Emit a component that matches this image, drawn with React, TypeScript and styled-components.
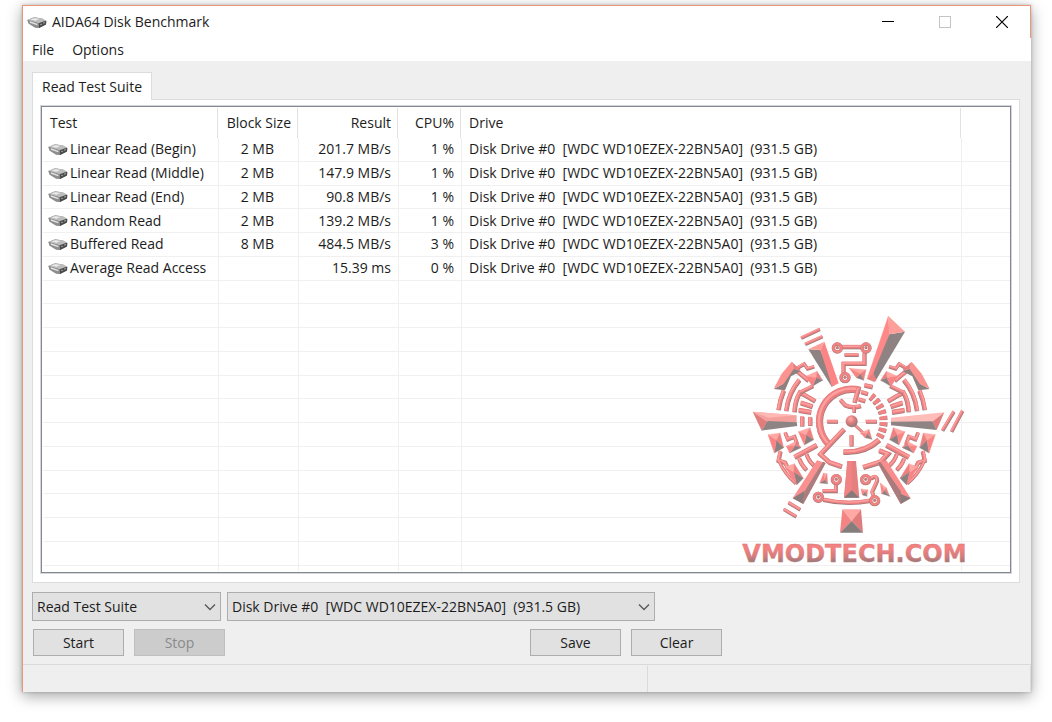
import React from "react";
import styled, { createGlobalStyle, css } from "styled-components";

const GlobalStyle = createGlobalStyle`
  *, *::before, *::after { box-sizing: border-box; }
  body {
    margin: 0;
    background: #fff;
    color: #1c1c1c;
    font: 14px/20px "Open Sans", "Noto Sans", sans-serif;
  }
  button, select { font: inherit; color: inherit; margin: 0; }
`;

const Desktop = styled.div`
  display: flex;
  min-height: 100vh;
  padding: 5px 21px 30px 22px;
`;

const Window = styled.main`
  position: relative;
  flex: 1;
  display: flex;
  flex-direction: column;
  min-width: 0;
  background: #efefef;
  border-top: 1px solid #e9967a;
  border-left: 1px solid #e9967a;
  box-shadow: 0 4px 14px rgba(0, 0, 0, 0.36), 0 0 3px rgba(0, 0, 0, 0.2);
`;

const TitleBar = styled.header`
  display: flex;
  align-items: center;
  height: 32px;
  padding-left: 4px;
  background: #fff;
  border-right: 1px solid #e9967a;
`;

const Title = styled.h1`
  flex: 1;
  margin: 0 0 0 5px;
  font-size: 14px;
  font-weight: 400;
`;

const CaptionButton = styled.button`
  display: grid;
  place-items: center;
  width: 57px;
  height: 30px;
  padding: 0;
  border: 0;
  background: none;
`;

const MenuBar = styled.nav`
  display: flex;
  gap: 18px;
  height: 23px;
  padding-left: 9px;
  background: #fff;
`;

const MenuItem = styled.button`
  padding: 0;
  border: 0;
  background: none;
  line-height: 24px;
`;

const Content = styled.div`
  flex: 1;
  display: flex;
  flex-direction: column;
  padding: 11px 11px 8px 9px;
`;

const Tab = styled.button`
  align-self: flex-start;
  z-index: 1;
  height: 28px;
  margin-bottom: -1px;
  padding: 0 9px;
  line-height: 26px;
  background: #fff;
  border: 1px solid #dcdcdc;
  border-bottom: 0;
`;

const TabPanel = styled.section`
  flex: 1;
  display: grid;
  padding: 6px 8px 9px;
  background: #fff;
  border: 1px solid #dcdcdc;
`;

const ListView = styled.div`
  position: relative;
  display: grid;
  border: 1px solid #828790;
  box-shadow: 0 0 0 1px #d4d6d9;
  padding: 1px 0 1px 1px;
`;

const Table = styled.table`
  width: 100%;
  height: 100%;
  table-layout: fixed;
  border-collapse: separate;
  border-spacing: 0;
`;

type Align = "left" | "right";

const HeadCell = styled.th<{ $align?: Align }>`
  height: 30px;
  padding: 0 1px 0 0;
  font-weight: 400;
  text-align: ${(p) => p.$align ?? "left"};
`;

const HeadLabel = styled.span<{ $last?: boolean }>`
  display: block;
  padding: 0 6px 0 7px;
  line-height: 30px;
  white-space: nowrap;
  ${(p) => !p.$last && css`border-right: 1px solid #e2e2e2;`}
`;

const Cell = styled.td<{ $align?: Align; $end?: number }>`
  height: 23px;
  padding: 0 ${(p) => p.$end ?? 7}px 0 7px;
  line-height: 22px;
  white-space: pre;
  text-align: ${(p) => p.$align ?? "left"};
  border-right: 1px solid #f0f0f0;
  border-bottom: 1px solid #f0f0f0;
  &:last-child { border-right: 0; }
`;

const TailCell = styled(Cell)`
  height: 5px;
  border-bottom: 0;
`;

const TestName = styled.span`
  display: flex;
  align-items: center;
  gap: 2px;
  margin-left: -2px;
`;

const Watermark = styled.svg`
  position: absolute;
  right: 35px;
  bottom: -8px;
  width: 240px;
  height: 275px;
  pointer-events: none;
`;

const Controls = styled.div`
  display: flex;
  flex-direction: column;
  gap: 8px;
  padding-top: 9px;
`;

const ControlRow = styled.div<{ $inset?: boolean }>`
  display: flex;
  gap: ${(p) => (p.$inset ? 10 : 6)}px;
  padding-left: ${(p) => (p.$inset ? 1 : 0)}px;
`;

const SelectBox = styled.label<{ $width: number }>`
  display: grid;
  align-items: center;
  width: ${(p) => p.$width}px;
  > * { grid-area: 1 / 1; }
  > svg { justify-self: end; margin-right: 5px; pointer-events: none; }
`;

const Select = styled.select`
  appearance: none;
  width: 100%;
  height: 29px;
  padding: 0 20px 0 4px;
  border: 1px solid #adadad;
  border-radius: 0;
  background: #e1e1e1;
`;

const Button = styled.button<{ $pushed?: boolean }>`
  width: 91px;
  height: 27px;
  padding: 0;
  border: 1px solid #adadad;
  background: #e1e1e1;
  ${(p) => p.$pushed && css`margin-left: 295px;`}
  &:disabled {
    color: #8a8a8a;
    background: #cccccc;
    border-color: #bfbfbf;
  }
`;

const StatusBar = styled.footer`
  display: grid;
  grid-template-columns: 625px 1fr;
  height: 28px;
  padding-top: 1px;
  border-top: 1px solid #dadada;
`;

const StatusPane = styled.div`
  border-right: 1px solid #dadada;
`;

const DriveIcon = () => (
  <svg width="20" height="13" viewBox="0 0 20 13" aria-hidden="true">
    <path d="M0.4 4 L7 1.2 L15 2.4 L19.4 5 L19 8.6 L12 12 L8 11.6 L1.6 7.6 Z" fill="#8a8a8a" />
    <path d="M0.4 4 L7 1.2 L15 2.4 L18.6 4.6 L11.8 7.2 Z" fill="#bdbdbd" />
    <path d="M3.6 3.6 L7.6 2.2 L12 3 L8.4 4.8 Z" fill="#ececec" />
    <path d="M0.4 4 L11.8 7.2 L11.6 12 L8 11.6 L1.6 7.6 Z" fill="#8e8e8e" />
    <path d="M3 6 L10.4 8.6" stroke="#e2e2e2" strokeWidth="1.4" />
    <path d="M11.8 7.2 L19.2 4.8 L19 8.6 L12 12 Z" fill="#4a4a4a" />
    <path d="M13.2 8.8 L15 8 M16.2 7.2 L17.8 6.4" stroke="#a0a0a0" strokeWidth="1.2" />
  </svg>
);

const Chevron = () => (
  <svg width="12" height="8" viewBox="0 0 12 8" aria-hidden="true">
    <path d="M1 1.5 L6 6.5 L11 1.5" fill="none" stroke="#5a5a5a" strokeWidth="1.4" />
  </svg>
);

const Rod = ({ d, w = 9 }: { d: string; w?: number }) => (
  <g fill="none">
    <path d={d} stroke="#a07878" strokeWidth={w} transform="translate(1 2)" />
    <path d={d} stroke="#ec8080" strokeWidth={w - 1} />
    <path d={d} stroke="#ffa0a0" strokeWidth={w / 3} transform="translate(-1 -1)" />
  </g>
);

const Gem = ({ pts, cx, cy }: { pts: [number, number][]; cx: number; cy: number }) => {
  const fills = ["#ffa8a4", "#ee8080", "#8c8080", "#fa8484"];
  return (
    <g>
      {pts.map((p, i) => {
        const q = pts[(i + 1) % pts.length];
        return (
          <polygon
            key={i}
            points={`${p[0]},${p[1]} ${q[0]},${q[1]} ${cx},${cy}`}
            fill={fills[i % fills.length]}
            stroke={fills[i % fills.length]}
          />
        );
      })}
    </g>
  );
};

const Node = ({ x, y }: { x: number; y: number }) => (
  <g fill="none">
    <circle cx={x} cy={y + 1} r="12" stroke="#a87878" strokeWidth="10" />
    <circle cx={x} cy={y} r="12" stroke="#f08282" strokeWidth="8" />
    <circle cx={x} cy={y} r="5" fill="#c87a7a" />
  </g>
);

const GearSide = () => (
  <g>
    <Rod d="M130 314 Q134 284 146 256" w={13} />
    <Rod d="M153 317 Q160 262 193 224" w={13} />
    <Rod d="M178 320 Q180 284 194 262 L214 272 L240 288" w={13} />
    <Rod d="M194 262 L234 242" w={11} />
    <Rod d="M180 192 L207 176 L217 190 L237 184" w={10} />
    <Rod d="M182 194 L220 226" w={13} />
    <polygon points="172,190 197,199 168,214 150,256 116,252 142,238" fill="#8f8080" />
    <polygon points="116,251 140,206 170,170 176,192 146,236" fill="#fb9491" />
    <polygon points="170,170 198,196 176,192" fill="#e88080" />
    <Gem pts={[[212, 214], [246, 199], [263, 226], [232, 244]]} cx={244} cy={218} />
    <Rod d="M197 293 L232 304" w={14} />
    <Rod d="M191 315 L228 321" w={14} />

    <Rod d="M136 438 L130 466 L150 472 L160 492" w={12} />
    <Rod d="M132 468 Q150 508 182 534" w={10} />
    <Gem pts={[[99, 389], [135, 384], [146, 428], [118, 444]]} cx={124} cy={406} />
    <Gem pts={[[150, 486], [178, 476], [205, 520], [185, 540]]} cx={176} cy={502} />
    <Rod d="M150 382 L158 402 L178 394 L186 416" w={11} />
    <Gem pts={[[154, 424], [184, 408], [198, 428], [164, 444]]} cx={180} cy={422} />
    <Gem pts={[[190, 380], [225, 368], [236, 404], [208, 420]]} cx={213} cy={390} />
    <Rod d="M178 456 L245 420" w={14} />
    <Rod d="M192 460 Q198 478 214 494" w={12} />
    <Rod d="M214 446 Q220 466 236 480" w={12} />
  </g>
);

const VmodtechLogo = () => (
  <Watermark viewBox="0 0 720 825" role="img" aria-label="VMODTECH.COM">
    <defs>
      <linearGradient id="letters" x1="0" y1="0" x2="0" y2="1">
        <stop offset="0.3" stopColor="#f58080" />
        <stop offset="0.6" stopColor="#d07c7c" />
        <stop offset="0.8" stopColor="#8c7c7c" />
      </linearGradient>
      <radialGradient id="hub" cx="0.4" cy="0.3" r="0.7">
        <stop offset="0" stopColor="#ffb0b0" />
        <stop offset="0.5" stopColor="#e07c7c" />
        <stop offset="1" stopColor="#8f7a7a" />
      </radialGradient>
    </defs>

    <polygon points="460,33 463,88 422,204 396,222" fill="#ff8888" stroke="#ff8888" />
    <polygon points="463,88 510,80 420,230 414,208" fill="#8f8282" />
    <polygon points="460,33 510,80 463,88" fill="#ff9f9a" />
    <polygon points="396,222 416,204 424,226 418,231" fill="#e88080" />

    <polygon points="220,133 256,135 300,240 290,245" fill="#8f8282" />
    <polygon points="268,110 311,235 290,245 286,228 256,135" fill="#fb8484" />
    <polygon points="220,133 268,110 256,135" fill="#ff9d9a" />
    <Rod d="M198 98 L254 72" />
    <Rod d="M210 117 L262 94" />

    <Rod d="M320 125 H380" w={12} />
    <Rod d="M328 149 H370" w={10} />
    <Rod d="M388 142 V175 H325 V206" w={12} />
    <Node x={307} y={128} />
    <Node x={393} y={128} />
    <Node x={330} y={217} />
    <Gem pts={[[343, 190], [393, 194], [386, 226], [364, 218]]} cx={376} cy={206} />

    <GearSide />
    <g transform="translate(700 0) scale(-1 1)">
      <GearSide />
    </g>

    <polygon points="53,320 185,331 185,355 98,350" fill="#f6a09d" />
    <polygon points="53,320 185,331 100,338" fill="#ffb9b5" />
    <polygon points="53,320 98,350 80,377" fill="#e07e7e" />
    <polygon points="98,348 185,352 187,363 80,377" fill="#8f8484" />
    <polygon points="468,338 628,322 592,350 468,352" fill="#ffbdb9" />
    <polygon points="628,322 605,375 592,350" fill="#e07e7e" />
    <polygon points="468,350 592,349 605,375 468,361" fill="#8f8484" />
    <Rod d="M656 319 L622 376" w={10} />
    <Rod d="M682 317 L649 379" w={10} />
    <Rod d="M201 334 V363" w={13} />
    <Rod d="M225 336 V361" w={13} />

    <Rod d="M375 255 A97 97 0 0 0 282 418" w={21} />
    <Rod d="M370 250 L358 292" w={13} />
    <Rod d="M327 372 L256 447 L284 472 L320 484" w={14} />
    <Rod d="M316 284 L330 300 Q352 310 377 302" w={12} />
    <Rod d="M357 304 V322" w={10} />
    <Rod d="M388 240 L412 245" w={13} />
    <Rod d="M378 260 L398 266" w={12} />
    <Rod d="M370 282 L390 288" w={12} />
    <g fill="none" strokeDasharray="11 7">
      <path d="M408 274 A96 96 0 0 1 432 400" stroke="#a07878" strokeWidth="24" />
      <path d="M408 273 A96 96 0 0 1 432 399" stroke="#f38484" strokeWidth="21" />
    </g>
    <Rod d="M325 440 Q388 444 432 404" w={16} />
    <Rod d="M432 436 L458 446 L436 470 L384 486" w={14} />

    <Rod d="M276 349 H308" w={11} />
    <Rod d="M392 349 H425" w={11} />
    <Rod d="M349 390 V423" w={12} />
    <Rod d="M358 358 L388 386" w={8} />
    <Gem pts={[[376, 384], [402, 373], [411, 403], [390, 398]]} cx={396} cy={386} />
    <circle cx="350" cy="349" r="18" fill="url(#hub)" />

    <polygon points="246,466 272,474 205,597 173,580" fill="#fb9090" />
    <polygon points="272,474 205,597 208,560 264,470" fill="#a87e7e" />
    <polygon points="173,580 208,558 205,597" fill="#8a7c7c" />
    <polygon points="454,466 428,474 497,597 527,580" fill="#fb8c8c" />
    <polygon points="428,474 497,597 498,560 436,470" fill="#a87c7c" />
    <polygon points="497,597 496,566 527,580" fill="#8a7c7c" />
    <Rod d="M160 592 L195 613" w={10} />
    <Rod d="M146 612 L183 634" w={10} />

    <polygon points="337,468 363,468 373,578 327,578" fill="#e57e7e" />
    <polygon points="337,468 350,468 350,556 327,578" fill="#f08484" />
    <polygon points="327,578 350,556 373,578" fill="#857a7a" />

    <polygon points="322,613 378,613 350,648" fill="#ffa8a4" />
    <polygon points="322,613 350,648 315,683" fill="#f48484" />
    <polygon points="378,613 384,683 350,648" fill="#e07c7c" />
    <polygon points="315,683 350,648 384,683" fill="#857c7c" />

    <Rod d="M302 538 V557 H262" w={11} />
    <Rod d="M264 583 Q335 600 406 586" w={12} />
    <Rod d="M406 520 Q426 506 426 526 L411 560 L416 574" w={11} />
    <Node x={304} y={523} />
    <Node x={250} y={576} />
    <Node x={392} y={523} />
    <Node x={419} y={586} />
    <Gem pts={[[266, 504], [276, 506], [278, 536], [254, 534]]} cx={268} cy={524} />
    <Gem pts={[[378, 552], [398, 554], [396, 574], [382, 570]]} cx={389} cy={560} />
    <Gem pts={[[436, 534], [454, 548], [464, 574], [440, 566]]} cx={448} cy={556} />

    <text
      x="22"
      y="772"
      fontFamily="'DejaVu Sans', sans-serif"
      fontWeight="700"
      fontSize="72"
      fill="url(#letters)"
      stroke="#d07878"
      strokeWidth="1"
    >
      VMODTECH.COM
    </text>
  </Watermark>
);

const DRIVE = "Disk Drive #0\u00a0\u00a0[WDC WD10EZEX-22BN5A0]\u00a0\u00a0(931.5 GB)";

const results = [
  { test: "Linear Read (Begin)", block: "2 MB", result: "201.7 MB/s", cpu: "1 %" },
  { test: "Linear Read (Middle)", block: "2 MB", result: "147.9 MB/s", cpu: "1 %" },
  { test: "Linear Read (End)", block: "2 MB", result: "90.8 MB/s", cpu: "1 %" },
  { test: "Random Read", block: "2 MB", result: "139.2 MB/s", cpu: "1 %" },
  { test: "Buffered Read", block: "8 MB", result: "484.5 MB/s", cpu: "3 %" },
  { test: "Average Read Access", block: "", result: "15.39 ms", cpu: "0 %" },
];

const blankRows = Array.from({ length: 12 }, (_, i) => i);

export default function App() {
  return (
    <Desktop>
      <GlobalStyle />
      <Window>
        <TitleBar>
          <DriveIcon />
          <Title>AIDA64 Disk Benchmark</Title>
          <CaptionButton aria-label="Minimize">
            <svg width="12" height="12" viewBox="0 0 12 12">
              <path d="M0 5.5 H12" stroke="#000" />
            </svg>
          </CaptionButton>
          <CaptionButton aria-label="Maximize" disabled>
            <svg width="12" height="12" viewBox="0 0 12 12">
              <rect x="0.5" y="0.5" width="11" height="11" fill="none" stroke="#c4c4c4" />
            </svg>
          </CaptionButton>
          <CaptionButton aria-label="Close">
            <svg width="12" height="12" viewBox="0 0 12 12">
              <path d="M0 0 L12 12 M12 0 L0 12" stroke="#000" strokeWidth="1.2" />
            </svg>
          </CaptionButton>
        </TitleBar>
        <MenuBar>
          <MenuItem>File</MenuItem>
          <MenuItem>Options</MenuItem>
        </MenuBar>
        <Content>
          <Tab role="tab" aria-selected="true">Read Test Suite</Tab>
          <TabPanel>
            <ListView>
              <Table>
                <colgroup>
                  <col width="176" />
                  <col width="80" />
                  <col width="100" />
                  <col width="63" />
                  <col width="500" />
                  <col />
                </colgroup>
                <thead>
                  <tr>
                    <HeadCell><HeadLabel>Test</HeadLabel></HeadCell>
                    <HeadCell $align="right"><HeadLabel>Block Size</HeadLabel></HeadCell>
                    <HeadCell $align="right"><HeadLabel>Result</HeadLabel></HeadCell>
                    <HeadCell $align="right"><HeadLabel>CPU%</HeadLabel></HeadCell>
                    <HeadCell><HeadLabel>Drive</HeadLabel></HeadCell>
                    <HeadCell><HeadLabel $last>&nbsp;</HeadLabel></HeadCell>
                  </tr>
                </thead>
                <tbody>
                  {results.map((r) => (
                    <tr key={r.test}>
                      <Cell><TestName><DriveIcon />{r.test}</TestName></Cell>
                      <Cell $align="right" $end={24}>{r.block}</Cell>
                      <Cell $align="right">{r.result}</Cell>
                      <Cell $align="right">{r.cpu}</Cell>
                      <Cell>{DRIVE}</Cell>
                      <Cell />
                    </tr>
                  ))}
                  {blankRows.map((i) => (
                    <tr key={i}>
                      <Cell /><Cell /><Cell /><Cell /><Cell /><Cell />
                    </tr>
                  ))}
                  <tr>
                    <TailCell /><TailCell /><TailCell /><TailCell /><TailCell /><TailCell />
                  </tr>
                </tbody>
              </Table>
              <VmodtechLogo />
            </ListView>
          </TabPanel>
          <Controls>
            <ControlRow>
              <SelectBox $width={189}>
                <Select aria-label="Test suite">
                  <option>Read Test Suite</option>
                </Select>
                <Chevron />
              </SelectBox>
              <SelectBox $width={428}>
                <Select aria-label="Drive">
                  <option>{DRIVE}</option>
                </Select>
                <Chevron />
              </SelectBox>
            </ControlRow>
            <ControlRow $inset>
              <Button>Start</Button>
              <Button disabled>Stop</Button>
              <Button $pushed>Save</Button>
              <Button>Clear</Button>
            </ControlRow>
          </Controls>
        </Content>
        <StatusBar>
          <StatusPane />
          <StatusPane />
        </StatusBar>
      </Window>
    </Desktop>
  );
}
